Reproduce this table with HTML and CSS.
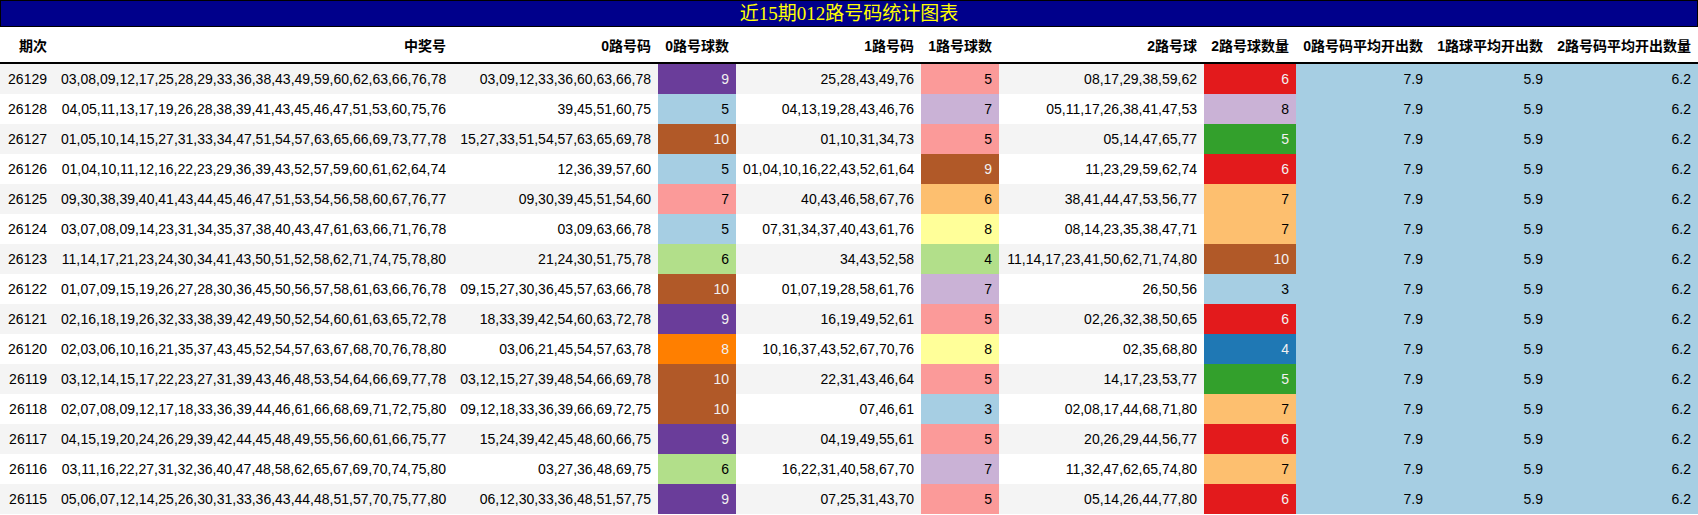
FILE: index.html
```html
<!DOCTYPE html>
<html lang="zh">
<head>
<meta charset="utf-8">
<title>近15期012路号码统计图表</title>
<link rel="stylesheet" href="styles.css">
</head>
<body>
<div class="chart">
  <div class="title">近15期012路号码统计图表</div>
  <table class="grid">
    <colgroup>
      <col class="w-issue"><col class="w-win"><col class="w-r0"><col class="w-n0"><col class="w-r1"><col class="w-n1"><col class="w-r2"><col class="w-n2"><col class="w-a0"><col class="w-a1"><col class="w-a2">
    </colgroup>
    <thead>
      <tr>
        <th>期次</th><th>中奖号</th><th>0路号码</th><th>0路号球数</th><th>1路号码</th><th>1路号球数</th><th>2路号球</th><th>2路号球数量</th><th>0路号码平均开出数</th><th>1路球平均开出数</th><th>2路号码平均开出数量</th>
      </tr>
    </thead>
    <tbody>
      <tr><td>26129</td><td>03,08,09,12,17,25,28,29,33,36,38,43,49,59,60,62,63,66,76,78</td><td>03,09,12,33,36,60,63,66,78</td><td class="purple">9</td><td>25,28,43,49,76</td><td class="pink">5</td><td>08,17,29,38,59,62</td><td class="red">6</td><td class="avg">7.9</td><td class="avg">5.9</td><td class="avg">6.2</td></tr>
      <tr><td>26128</td><td>04,05,11,13,17,19,26,28,38,39,41,43,45,46,47,51,53,60,75,76</td><td>39,45,51,60,75</td><td class="sky">5</td><td>04,13,19,28,43,46,76</td><td class="lilac">7</td><td>05,11,17,26,38,41,47,53</td><td class="lilac">8</td><td class="avg">7.9</td><td class="avg">5.9</td><td class="avg">6.2</td></tr>
      <tr><td>26127</td><td>01,05,10,14,15,27,31,33,34,47,51,54,57,63,65,66,69,73,77,78</td><td>15,27,33,51,54,57,63,65,69,78</td><td class="brown">10</td><td>01,10,31,34,73</td><td class="pink">5</td><td>05,14,47,65,77</td><td class="green">5</td><td class="avg">7.9</td><td class="avg">5.9</td><td class="avg">6.2</td></tr>
      <tr><td>26126</td><td>01,04,10,11,12,16,22,23,29,36,39,43,52,57,59,60,61,62,64,74</td><td>12,36,39,57,60</td><td class="sky">5</td><td>01,04,10,16,22,43,52,61,64</td><td class="brown">9</td><td>11,23,29,59,62,74</td><td class="red">6</td><td class="avg">7.9</td><td class="avg">5.9</td><td class="avg">6.2</td></tr>
      <tr><td>26125</td><td>09,30,38,39,40,41,43,44,45,46,47,51,53,54,56,58,60,67,76,77</td><td>09,30,39,45,51,54,60</td><td class="pink">7</td><td>40,43,46,58,67,76</td><td class="peach">6</td><td>38,41,44,47,53,56,77</td><td class="peach">7</td><td class="avg">7.9</td><td class="avg">5.9</td><td class="avg">6.2</td></tr>
      <tr><td>26124</td><td>03,07,08,09,14,23,31,34,35,37,38,40,43,47,61,63,66,71,76,78</td><td>03,09,63,66,78</td><td class="sky">5</td><td>07,31,34,37,40,43,61,76</td><td class="lemon">8</td><td>08,14,23,35,38,47,71</td><td class="peach">7</td><td class="avg">7.9</td><td class="avg">5.9</td><td class="avg">6.2</td></tr>
      <tr><td>26123</td><td>11,14,17,21,23,24,30,34,41,43,50,51,52,58,62,71,74,75,78,80</td><td>21,24,30,51,75,78</td><td class="lime">6</td><td>34,43,52,58</td><td class="lime">4</td><td>11,14,17,23,41,50,62,71,74,80</td><td class="brown">10</td><td class="avg">7.9</td><td class="avg">5.9</td><td class="avg">6.2</td></tr>
      <tr><td>26122</td><td>01,07,09,15,19,26,27,28,30,36,45,50,56,57,58,61,63,66,76,78</td><td>09,15,27,30,36,45,57,63,66,78</td><td class="brown">10</td><td>01,07,19,28,58,61,76</td><td class="lilac">7</td><td>26,50,56</td><td class="sky">3</td><td class="avg">7.9</td><td class="avg">5.9</td><td class="avg">6.2</td></tr>
      <tr><td>26121</td><td>02,16,18,19,26,32,33,38,39,42,49,50,52,54,60,61,63,65,72,78</td><td>18,33,39,42,54,60,63,72,78</td><td class="purple">9</td><td>16,19,49,52,61</td><td class="pink">5</td><td>02,26,32,38,50,65</td><td class="red">6</td><td class="avg">7.9</td><td class="avg">5.9</td><td class="avg">6.2</td></tr>
      <tr><td>26120</td><td>02,03,06,10,16,21,35,37,43,45,52,54,57,63,67,68,70,76,78,80</td><td>03,06,21,45,54,57,63,78</td><td class="orange">8</td><td>10,16,37,43,52,67,70,76</td><td class="lemon">8</td><td>02,35,68,80</td><td class="blue">4</td><td class="avg">7.9</td><td class="avg">5.9</td><td class="avg">6.2</td></tr>
      <tr><td>26119</td><td>03,12,14,15,17,22,23,27,31,39,43,46,48,53,54,64,66,69,77,78</td><td>03,12,15,27,39,48,54,66,69,78</td><td class="brown">10</td><td>22,31,43,46,64</td><td class="pink">5</td><td>14,17,23,53,77</td><td class="green">5</td><td class="avg">7.9</td><td class="avg">5.9</td><td class="avg">6.2</td></tr>
      <tr><td>26118</td><td>02,07,08,09,12,17,18,33,36,39,44,46,61,66,68,69,71,72,75,80</td><td>09,12,18,33,36,39,66,69,72,75</td><td class="brown">10</td><td>07,46,61</td><td class="sky">3</td><td>02,08,17,44,68,71,80</td><td class="peach">7</td><td class="avg">7.9</td><td class="avg">5.9</td><td class="avg">6.2</td></tr>
      <tr><td>26117</td><td>04,15,19,20,24,26,29,39,42,44,45,48,49,55,56,60,61,66,75,77</td><td>15,24,39,42,45,48,60,66,75</td><td class="purple">9</td><td>04,19,49,55,61</td><td class="pink">5</td><td>20,26,29,44,56,77</td><td class="red">6</td><td class="avg">7.9</td><td class="avg">5.9</td><td class="avg">6.2</td></tr>
      <tr><td>26116</td><td>03,11,16,22,27,31,32,36,40,47,48,58,62,65,67,69,70,74,75,80</td><td>03,27,36,48,69,75</td><td class="lime">6</td><td>16,22,31,40,58,67,70</td><td class="lilac">7</td><td>11,32,47,62,65,74,80</td><td class="peach">7</td><td class="avg">7.9</td><td class="avg">5.9</td><td class="avg">6.2</td></tr>
      <tr><td>26115</td><td>05,06,07,12,14,25,26,30,31,33,36,43,44,48,51,57,70,75,77,80</td><td>06,12,30,33,36,48,51,57,75</td><td class="purple">9</td><td>07,25,31,43,70</td><td class="pink">5</td><td>05,14,26,44,77,80</td><td class="red">6</td><td class="avg">7.9</td><td class="avg">5.9</td><td class="avg">6.2</td></tr>
    </tbody>
  </table>
</div>
</body>
</html>
```

FILE: styles.css
```css
html, body {
  margin: 0;
  padding: 0;
  background: #ffffff;
}

.chart {
  width: 1698px;
}

.title {
  height: 25px;
  line-height: 25px;
  border: 1px solid #000000;
  background: #00008b;
  color: #ffff00;
  text-align: center;
  font-family: "Liberation Serif", "Noto Sans CJK SC", serif;
  font-size: 19px;
}

.grid {
  width: 1698px;
  table-layout: fixed;
  border-collapse: collapse;
  border-spacing: 0;
  font-family: "Liberation Sans", "Noto Sans CJK SC", sans-serif;
  font-size: 14px;
  color: #000000;
}

.w-issue { width: 54px; }
.w-win { width: 399px; }
.w-r0 { width: 205px; }
.w-n0 { width: 78px; }
.w-r1 { width: 185px; }
.w-n1 { width: 78px; }
.w-r2 { width: 205px; }
.w-n2 { width: 92px; }
.w-a0 { width: 134px; }
.w-a1 { width: 120px; }
.w-a2 { width: 148px; }

.grid th {
  height: 35px;
  padding: 0 7px;
  text-align: right;
  vertical-align: middle;
  font-weight: bold;
  white-space: nowrap;
  border-bottom: 2px solid #000000;
}

.grid td {
  height: 30px;
  padding: 0 7px;
  text-align: right;
  vertical-align: middle;
  white-space: nowrap;
}

.grid tbody tr:nth-child(odd) {
  background: #f4f4f4;
}

.grid tbody tr:nth-child(even) {
  background: #ffffff;
}

.grid td.avg { background: #a6cee3; }
.grid td.sky { background: #a6cee3; }
.grid td.blue { background: #1f78b4; color: #f1f1f1; }
.grid td.lime { background: #b2df8a; }
.grid td.green { background: #33a02c; color: #f1f1f1; }
.grid td.pink { background: #fb9a99; }
.grid td.red { background: #e31a1c; color: #f1f1f1; }
.grid td.peach { background: #fdbf6f; }
.grid td.orange { background: #ff7f00; color: #f1f1f1; }
.grid td.lilac { background: #cab2d6; }
.grid td.purple { background: #6a3d9a; color: #f1f1f1; }
.grid td.lemon { background: #ffff99; }
.grid td.brown { background: #b15928; color: #f1f1f1; }
```
